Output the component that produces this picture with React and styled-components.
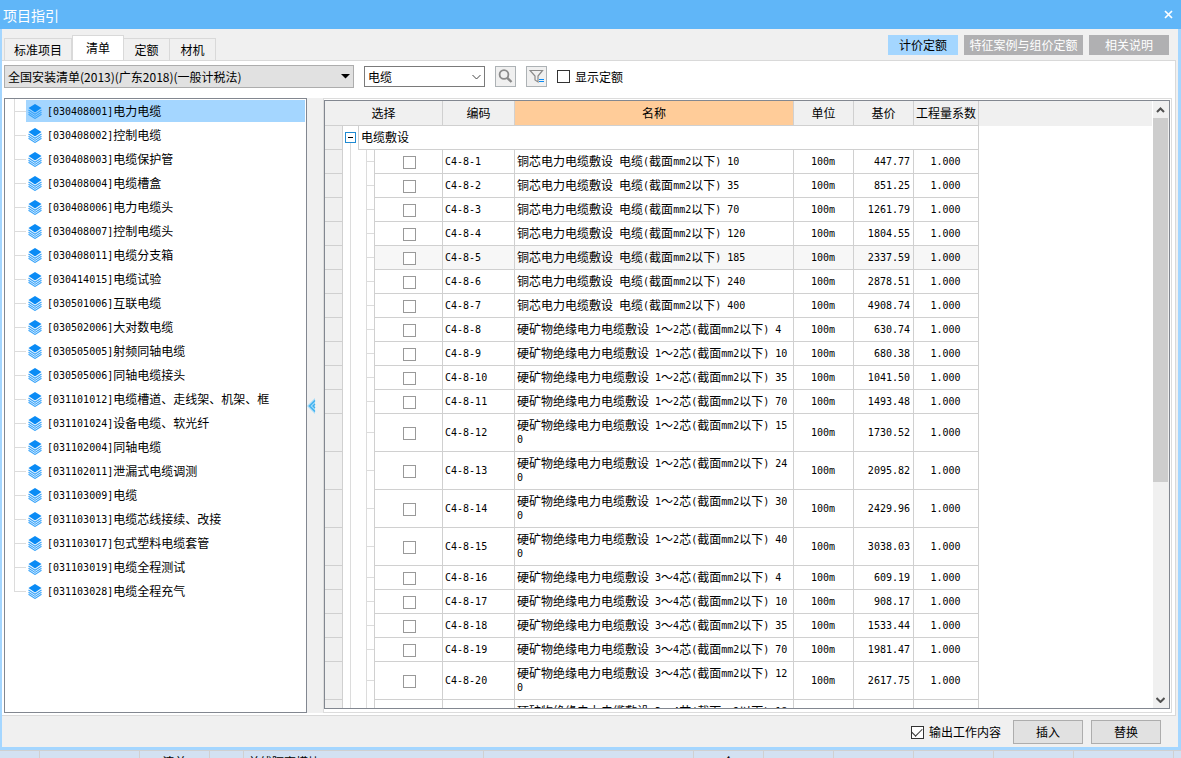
import React, { useState } from "react";
import styled, { createGlobalStyle } from "styled-components";

const GlobalStyle = createGlobalStyle`
    * {
        box-sizing: border-box;
    }

    html, body, #root {
        height: 100%;
        margin: 0;
    }

    body {
        overflow: hidden;
        background-color: #d3e1f2;
        color: #000;
        font-family: "Noto Sans CJK SC", sans-serif;
        font-size: 12px;
        line-height: 16px;
    }

    button, input, select {
        font: inherit;
        color: inherit;
    }
`;

const Page = styled.div`
    display: flex;
    flex-direction: column;
    height: 100%;
`;

const TitleBar = styled.header`
    display: flex;
    flex: none;
    align-items: center;
    justify-content: space-between;
    height: 29px;
    padding: 0 8px 0 3px;
    background-color: #60b6f8;
    color: #fff;
`;

const Title = styled.h1`
    margin: 0;
    font-size: 14px;
    font-weight: 400;
    line-height: 20px;
`;

const CloseButton = styled.button`
    display: flex;
    padding: 0;
    border: 0;
    background: none;
    color: #fff;
`;

const Dialog = styled.main`
    display: flex;
    flex: 1;
    flex-direction: column;
    min-height: 0;
    border: solid #a4d6ff;
    border-width: 0 3px 3px 2px;
    background-color: #f0f0f0;
`;

const TabBar = styled.div`
    display: flex;
    flex: none;
    align-items: flex-end;
    justify-content: space-between;
    height: 31px;
    padding: 0 9px 0 2px;
`;

const Tabs = styled.div`
    display: flex;
    align-items: flex-end;
`;

const Tab = styled.button`
    width: ${props => props.$width}px;
    height: ${props => props.$active ? 25 : 22}px;
    padding: 0;
    border: 1px solid #d9d9d9;
    border-bottom: 0;
    border-left-width: ${props => props.$joined ? 0 : 1}px;
    background-color: ${props => props.$active ? "#fff" : "#f0f0f0"};
`;

const ModeGroup = styled.div`
    display: flex;
    gap: 6px;
    padding-bottom: 5px;
`;

const ModeButton = styled.button`
    width: ${props => props.$width}px;
    height: 20px;
    padding: 0;
    border: 0;
    background-color: ${props => props.$active ? "#a4d6ff" : "#b0b0b2"};
    color: ${props => props.$active ? "#000" : "#fff"};
`;

const TabPanel = styled.section`
    display: flex;
    flex: 1;
    flex-direction: column;
    min-height: 0;
    margin-right: 2px;
    padding: 0 3px 2px 2px;
    border: 1px solid #d9d9d9;
    border-left: 0;
    background-color: #fff;
`;

const Toolbar = styled.div`
    display: flex;
    flex: none;
    align-items: center;
    height: 37px;
    padding-bottom: 6px;
`;

const SelectWrap = styled.div`
    display: grid;
    flex: none;
    align-items: center;
    width: ${props => props.$width}px;
    margin-right: 10px;

    > * {
        grid-area: 1 / 1;
    }

    > svg {
        justify-self: end;
        margin-right: 4px;
        pointer-events: none;
    }
`;

const Select = styled.select`
    width: 100%;
    height: ${props => props.$flat ? 21 : 23}px;
    padding: 0 3px;
    appearance: none;
    border: 1px solid ${props => props.$flat ? "#7a7a7a" : "#adadad"};
    border-radius: 0;
    background-color: ${props => props.$flat ? "#fff" : "#e1e1e1"};
`;

const IconButton = styled.button`
    display: flex;
    align-items: center;
    justify-content: center;
    width: 21px;
    height: 21px;
    margin-right: 10px;
    padding: 0;
    border: 1px solid #adb2b5;
    background-color: #f0f0f0;
`;

const CheckLabel = styled.label`
    display: flex;
    align-items: center;
    gap: 5px;
`;

const CheckBox = styled.input`
    display: grid;
    place-content: center;
    width: 13px;
    height: 13px;
    margin: 0;
    appearance: none;
    border: 1px solid ${props => props.$light ? "#999" : "#333"};
    background-color: #fff;

    &:checked::after {
        content: "";
        width: 9px;
        height: 5px;
        margin-bottom: 3px;
        border: solid #333;
        border-width: 0 0 1px 1px;
        transform: rotate(-45deg);
    }
`;

const Panes = styled.div`
    display: flex;
    flex: 1;
    min-height: 0;
`;

const TreePane = styled.nav`
    flex: none;
    width: 303px;
    overflow: hidden;
    border: 1px solid #828790;
    background-color: #fff;
`;

const TreeList = styled.ul`
    margin: 0;
    padding: 0 1px 0 9px;
    list-style: none;
`;

const TreeItem = styled.li`
    display: flex;
    align-items: center;
    height: 24px;
`;

const Branch = styled.span`
    display: flex;
    flex: none;
    flex-direction: column;
    width: 12px;
    height: 24px;

    &::before, &::after {
        content: "";
        height: 12px;
        border-left: 1px solid #dcdcdc;
    }

    &::before {
        border-bottom: 1px solid #dcdcdc;
    }

    &::after {
        border-left-width: ${props => props.$last ? 0 : 1}px;
    }
`;

const TreeButton = styled.button`
    display: flex;
    flex: 1;
    align-items: center;
    gap: 5px;
    height: 22px;
    padding: 0 2px;
    border: 0;
    background-color: ${props => props.$selected ? "#a4d6ff" : "transparent"};
    text-align: left;
`;

const Splitter = styled.button`
    display: flex;
    flex: none;
    align-items: center;
    width: 16px;
    padding: 0;
    border: 0;
    background-color: #f0f0f0;
`;

const GridFrame = styled.div`
    display: flex;
    flex: 1;
    min-width: 0;
    padding: 1px 1px 3px 0;
    border: 1px solid #dcdcdc;
`;

const GridPane = styled.div`
    display: flex;
    flex: 1;
    min-width: 0;
    border: 1px solid #828790;
`;

const GridView = styled.div`
    flex: 1;
    min-width: 0;
    overflow: hidden;
    background: linear-gradient(#f0f0f0 25px, #fff 25px);
`;

const Table = styled.table`
    width: 654px;
    table-layout: fixed;
    border-collapse: separate;
    border-spacing: 0;
`;

const HeadCell = styled.th`
    height: 25px;
    padding: 0;
    border: solid #d0d0d0;
    border-width: 0 1px 1px 0;
    background-color: ${props => props.$active ? "#ffcc99" : "#f0f0f0"};
    font-weight: 400;
    white-space: nowrap;
`;

const Cell = styled.td`
    height: ${props => props.$tall ? 38 : 24}px;
    padding: 0 3px 2px 2px;
    border: solid #d0d0d0;
    border-width: 0 1px 1px 0;
    background-color: ${props => props.$shaded ? "#f7f7f7" : "#fff"};
    line-height: 14px;
    text-align: ${props => props.$align || "left"};
    word-break: break-all;
`;

const CheckCell = styled(Cell)`
    padding: 2px 0 0 2px;

    > input {
        margin: 0 auto;
    }
`;

const Gutter = styled(Cell)`
    background-color: #f0f0f0;
`;

const TreeCell = styled.td`
    height: 24px;
    padding: 0;
    border-right: 1px solid #d0d0d0;
`;

const Rails = styled.div`
    display: grid;
    grid-template-columns: 8px 16px 7px;
    grid-template-rows: 1fr 1fr;
    height: ${props => props.$tall ? 38 : 24}px;
`;

const Rail = styled.span`
    grid-row: ${props => props.$stub ? "auto" : "span 2"};
    border-right: ${props => props.$stub ? 0 : 1}px solid #dcdcdc;
    border-bottom: ${props => props.$stub ? 1 : 0}px solid #dcdcdc;
`;

const ExpanderRail = styled.div`
    display: flex;
    flex-direction: column;
    align-items: center;
    height: 24px;
    padding-top: 6px;

    &::after {
        content: "";
        flex: 1;
        width: 1px;
        background-color: #dcdcdc;
    }
`;

const Expander = styled.button`
    display: flex;
    flex: none;
    align-items: center;
    justify-content: center;
    width: 11px;
    height: 11px;
    padding: 0;
    border: 1px solid #1f8ad2;
    background-color: #fff;

    &::after {
        content: "";
        width: 5px;
        height: 1px;
        background-color: #000;
    }
`;

const Latin = styled.span`
    font-family: "DejaVu Sans Mono", monospace;
    font-size: 10px;
    line-height: 0;
    vertical-align: 1px;
`;

const ScrollBar = styled.div`
    display: flex;
    flex: none;
    flex-direction: column;
    width: 17px;
    padding-right: 1px;
    border-left: 1px solid #fff;
    background-color: #f0f0f0;
`;

const ScrollButton = styled.button`
    display: flex;
    flex: none;
    align-items: center;
    justify-content: center;
    height: 17px;
    padding: 0;
    border: 0;
    background: none;
`;

const ScrollTrack = styled.div`
    flex: 1;
`;

const ScrollThumb = styled.div`
    height: 63.5%;
    background-color: #cdcdcd;
`;

const Footer = styled.footer`
    display: flex;
    flex: none;
    align-items: center;
    justify-content: flex-end;
    gap: 8px;
    height: 31px;
    padding: 1px 17px 0 0;
`;

const FooterCheck = styled(CheckLabel)`
    margin-right: 4px;
`;

const FooterButton = styled.button`
    width: 70px;
    height: 24px;
    padding: 0;
    border: 1px solid #adadad;
    background-color: #e1e1e1;
`;

const BackSheet = styled.div`
    display: flex;
    flex: none;
    height: 8px;
    overflow: hidden;
    border-top: 1px solid #d0d0d0;
`;

const BackCell = styled.span`
    flex: none;
    width: ${props => props.$width}px;
    padding: 3px 4px 0;
    border-right: 1px solid #d0d0d0;
    text-align: ${props => props.$align || "left"};
`;

const treeItems = [
    "[030408001]电力电缆",
    "[030408002]控制电缆",
    "[030408003]电缆保护管",
    "[030408004]电缆槽盒",
    "[030408006]电力电缆头",
    "[030408007]控制电缆头",
    "[030408011]电缆分支箱",
    "[030414015]电缆试验",
    "[030501006]互联电缆",
    "[030502006]大对数电缆",
    "[030505005]射频同轴电缆",
    "[030505006]同轴电缆接头",
    "[031101012]电缆槽道、走线架、机架、框",
    "[031101024]设备电缆、软光纤",
    "[031102004]同轴电缆",
    "[031102011]泄漏式电缆调测",
    "[031103009]电缆",
    "[031103013]电缆芯线接续、改接",
    "[031103017]包式塑料电缆套管",
    "[031103019]电缆全程测试",
    "[031103028]电缆全程充气",
];

const copper = "铜芯电力电缆敷设 电缆(截面mm2以下) ";
const mineral12 = "硬矿物绝缘电力电缆敷设 1～2芯(截面mm2以下) ";
const mineral34 = "硬矿物绝缘电力电缆敷设 3～4芯(截面mm2以下) ";

const rows = [
    { name: copper + "10", price: "447.77" },
    { name: copper + "35", price: "851.25" },
    { name: copper + "70", price: "1261.79" },
    { name: copper + "120", price: "1804.55" },
    { name: copper + "185", price: "2337.59", shaded: true },
    { name: copper + "240", price: "2878.51" },
    { name: copper + "400", price: "4908.74" },
    { name: mineral12 + "4", price: "630.74" },
    { name: mineral12 + "10", price: "680.38" },
    { name: mineral12 + "35", price: "1041.50" },
    { name: mineral12 + "70", price: "1493.48" },
    { name: mineral12 + "150", price: "1730.52", tall: true },
    { name: mineral12 + "240", price: "2095.82", tall: true },
    { name: mineral12 + "300", price: "2429.96", tall: true },
    { name: mineral12 + "400", price: "3038.03", tall: true },
    { name: mineral34 + "4", price: "609.19" },
    { name: mineral34 + "10", price: "908.17" },
    { name: mineral34 + "35", price: "1533.44" },
    { name: mineral34 + "70", price: "1981.47" },
    { name: mineral34 + "120", price: "2617.75", tall: true },
    { name: mineral34 + "185", price: "3125.60", tall: true },
];

const backCells = [
    { width: 40 }, { width: 100 }, { width: 70, text: "清单", align: "center" }, { width: 34 },
    { width: 240, text: "单线隔离模块" }, { width: 210 }, { width: 70, text: "个", align: "center" },
    { width: 70 }, { width: 80 }, { width: 80 }, { width: 80 }, { width: 100 },
];

// half-width characters take exactly half of a 12px full-width one
const Mixed = ({ text }) => text.split(/([\x20-\x7e]+)/).filter(Boolean).map((part, i) => (
    /^[\x20-\x7e]/.test(part) ? <Latin key={i}>{part}</Latin> : part
));

const LayersIcon = () => (
    <svg width="14" height="15" viewBox="0 0 14 15" aria-hidden="true">
        <path d="M7 0 13.5 4 7 8.5 .5 4Z" fill="#0a8bf5" />
        <path d="M.5 6 7 10.3 13.5 6M.5 8.2 7 12.4 13.5 8.2M.5 10.2 7 14.4 13.5 10.2" fill="none" stroke="#3ba5fa" strokeWidth="1.2" />
    </svg>
);

const Chevron = ({ up, color = "#505050", weight = 2 }) => (
    <svg width="9" height="6" viewBox="0 0 9 6" aria-hidden="true">
        <path d={up ? "M1 5 4.5 1.5 8 5" : "M.5 1 4.5 5 8.5 1"} fill="none" stroke={color} strokeWidth={weight} />
    </svg>
);

const App = () => {
    const [selected, setSelected] = useState(0);

    const renderRow = (row, i) => (
        <tr key={i}>
            <Gutter $tall={row.tall} />
            <TreeCell colSpan="2">
                <Rails $tall={row.tall}><Rail /><Rail /><Rail $stub /></Rails>
            </TreeCell>
            <CheckCell $shaded={row.shaded}>
                <CheckBox type="checkbox" $light aria-label={`C4-8-${i + 1}`} />
            </CheckCell>
            <Cell $shaded={row.shaded}><Mixed text={`C4-8-${i + 1}`} /></Cell>
            <Cell $shaded={row.shaded}><Mixed text={row.name} /></Cell>
            <Cell $shaded={row.shaded} $align="center"><Mixed text="100m" /></Cell>
            <Cell $shaded={row.shaded} $align="right"><Mixed text={row.price} /></Cell>
            <Cell $shaded={row.shaded} $align="center"><Mixed text="1.000" /></Cell>
        </tr>
    );

    return (
        <Page>
            <GlobalStyle />
            <TitleBar>
                <Title>项目指引</Title>
                <CloseButton aria-label="关闭">
                    <svg width="9" height="9" viewBox="0 0 9 9"><path d="M1 1 8 8M8 1 1 8" stroke="#fff" strokeWidth="1.7" /></svg>
                </CloseButton>
            </TitleBar>
            <Dialog>
                <TabBar>
                    <Tabs>
                        <Tab $width={68}>标准项目</Tab>
                        <Tab $width={52} $active>清单</Tab>
                        <Tab $width={46} $joined>定额</Tab>
                        <Tab $width={46} $joined>材机</Tab>
                    </Tabs>
                    <ModeGroup>
                        <ModeButton $width={70} $active>计价定额</ModeButton>
                        <ModeButton $width={119}>特征案例与组价定额</ModeButton>
                        <ModeButton $width={80}>相关说明</ModeButton>
                    </ModeGroup>
                </TabBar>
                <TabPanel>
                    <Toolbar>
                        <SelectWrap $width={350}>
                            <Select aria-label="清单库">
                                <option>全国安装清单(2013)(广东2018)(一般计税法)</option>
                            </Select>
                            <svg width="9" height="5" viewBox="0 0 9 5"><path d="M0 0H9L4.5 4.5Z" /></svg>
                        </SelectWrap>
                        <SelectWrap $width={121}>
                            <Select $flat aria-label="关键字">
                                <option>电缆</option>
                            </Select>
                            <Chevron color="#444" weight={1} />
                        </SelectWrap>
                        <IconButton aria-label="查找">
                            <svg width="15" height="15" viewBox="0 0 15 15" fill="none" stroke="#8a8a8a">
                                <circle cx="6" cy="5.5" r="4.4" strokeWidth="1.8" />
                                <path d="M9.3 8.8 13.5 13" strokeWidth="2.4" />
                            </svg>
                        </IconButton>
                        <IconButton aria-label="筛选">
                            <svg width="15" height="15" viewBox="0 0 15 15">
                                <path d="M1 1.5H13.5L9 7V13L6 11V7Z" fill="none" stroke="#8a8a8a" strokeWidth="1.2" />
                                <path d="M10 10H15V11H10ZM10 12H15V13H10Z" fill="#0a8bf5" />
                            </svg>
                        </IconButton>
                        <CheckLabel><CheckBox type="checkbox" />显示定额</CheckLabel>
                    </Toolbar>
                    <Panes>
                        <TreePane>
                            <TreeList>
                                {treeItems.map((text, i) => (
                                    <TreeItem key={text}>
                                        <Branch $last={i === treeItems.length - 1} />
                                        <TreeButton $selected={i === selected} onClick={() => setSelected(i)}>
                                            <LayersIcon />
                                            <span><Mixed text={text} /></span>
                                        </TreeButton>
                                    </TreeItem>
                                ))}
                            </TreeList>
                        </TreePane>
                        <Splitter aria-label="收起">
                            <svg width="9" height="16" viewBox="0 0 9 16" fill="none">
                                <path d="M8 0V16L0 8Z" fill="#a5dbf8" />
                                <path d="M8 2.5 2.5 8 8 13.5M8 6 6 8 8 10" stroke="#3fb0ef" strokeWidth="1.3" />
                            </svg>
                        </Splitter>
                        <GridFrame>
                            <GridPane>
                                <GridView>
                                    <Table>
                                        <colgroup>
                                            <col width="18" /><col width="16" /><col width="16" /><col width="68" />
                                            <col width="72" /><col width="279" /><col width="60" /><col width="60" /><col width="65" />
                                        </colgroup>
                                        <thead>
                                            <tr>
                                                <HeadCell colSpan="4">选择</HeadCell>
                                                <HeadCell>编码</HeadCell>
                                                <HeadCell $active>名称</HeadCell>
                                                <HeadCell>单位</HeadCell>
                                                <HeadCell>基价</HeadCell>
                                                <HeadCell>工程量系数</HeadCell>
                                            </tr>
                                        </thead>
                                        <tbody>
                                            <tr>
                                                <Gutter />
                                                <TreeCell>
                                                    <ExpanderRail><Expander aria-label="折叠" /></ExpanderRail>
                                                </TreeCell>
                                                <Cell colSpan="7">电缆敷设</Cell>
                                            </tr>
                                            {rows.map(renderRow)}
                                        </tbody>
                                    </Table>
                                </GridView>
                                <ScrollBar>
                                    <ScrollButton aria-label="向上"><Chevron up /></ScrollButton>
                                    <ScrollTrack><ScrollThumb /></ScrollTrack>
                                    <ScrollButton aria-label="向下"><Chevron /></ScrollButton>
                                </ScrollBar>
                            </GridPane>
                        </GridFrame>
                    </Panes>
                </TabPanel>
                <Footer>
                    <FooterCheck><CheckBox type="checkbox" defaultChecked />输出工作内容</FooterCheck>
                    <FooterButton>插入</FooterButton>
                    <FooterButton>替换</FooterButton>
                </Footer>
            </Dialog>
            <BackSheet>
                {backCells.map((cell, i) => (
                    <BackCell key={i} $width={cell.width} $align={cell.align}>{cell.text}</BackCell>
                ))}
            </BackSheet>
        </Page>
    );
}

export default App;
